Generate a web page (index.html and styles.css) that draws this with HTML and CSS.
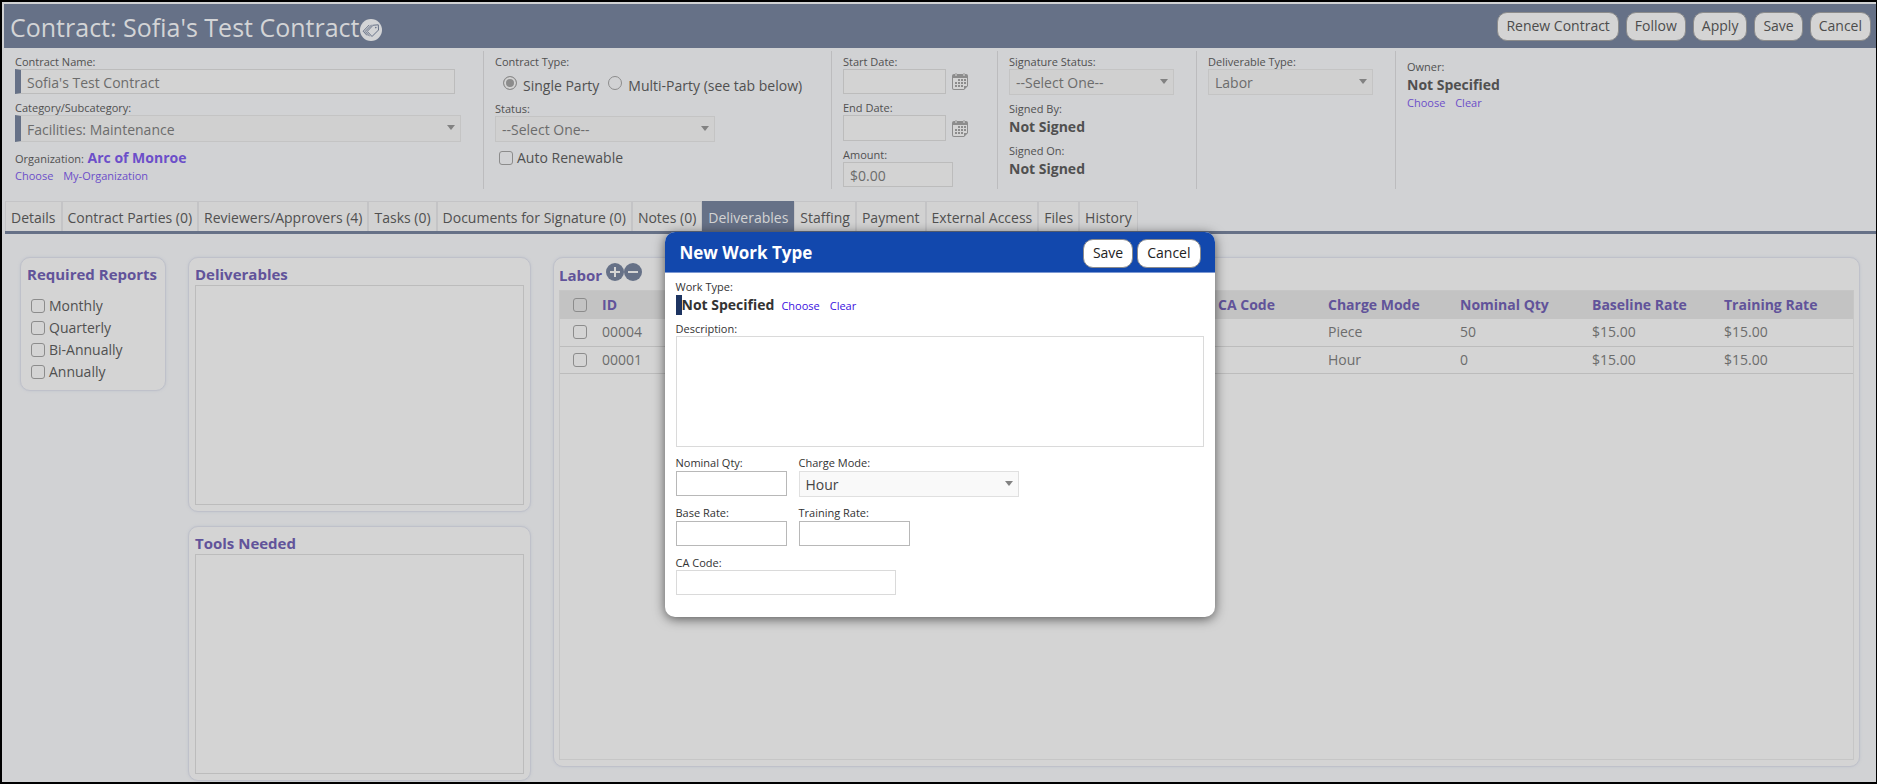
FILE: index.html
```
<!DOCTYPE html>
<html lang="en">
<head>
  <meta charset="UTF-8">
  <meta name="viewport" content="width=device-width, initial-scale=1.0">
  <title>Contract: Sofia's Test Contract</title>
  <link rel="stylesheet" href="styles.css">
</head>
<body>
  <svg class="sprite" width="0" height="0" aria-hidden="true">
    <symbol id="calendar" viewBox="0 0 16 17">
      <path d="M2 1h12q2 0 2 2v10l-4 4H2q-2 0-2-2V3q0-2 2-2z" fill="#8c8c8c"/>
      <path d="M1 5h14v8h-3v3H2q-1 0-1-1z" fill="#d4d4d4"/>
      <path d="M3 0h2v3H3zM11 0h2v3h-2z" fill="#b4b4b4"/>
      <path d="M6 6h2v2H6zM9 6h2v2H9zM12 6h2v2h-2zM3 9h2v2H3zM6 9h2v2H6zM9 9h2v2H9zM12 9h2v2h-2zM3 12h2v2H3zM6 12h2v2H6zM9 12h2v2H9z" fill="#8c8c8c"/>
    </symbol>
  </svg>

  <header class="topbar">
    <h1>Contract: Sofia's Test Contract</h1>
    <svg class="tag-icon" viewBox="0 0 22 22" aria-hidden="true">
      <circle cx="11" cy="11" r="11" fill="#d3d4d6"/>
      <g fill="none" stroke="#667187" stroke-linejoin="round" stroke-linecap="round">
        <path d="M13.500 6.200l4.800-.4.2 5.200-6.500 6.500-4.500-4.800z"/>
        <path d="M11.500 6L5.200 12.400l4.200 4.600M9 6.200L3.200 12.200l3.600 4"/>
      </g>
      <circle cx="15.800" cy="8.600" r=".8" fill="#667187"/>
    </svg>
    <div class="buttons">
      <button>Renew Contract</button>
      <button>Follow</button>
      <button>Apply</button>
      <button>Save</button>
      <button>Cancel</button>
    </div>
  </header>

  <section class="summary">
    <div class="col">
      <label for="contract-name">Contract Name:</label>
      <input type="text" id="contract-name" class="required" value="Sofia's Test Contract">
      <label for="category">Category/Subcategory:</label>
      <select id="category" class="required wide"><option>Facilities: Maintenance</option></select>
      <div class="org"><span class="label">Organization:</span> <a href="#" class="org-name">Arc of Monroe</a></div>
      <div class="links"><a href="#">Choose</a> <a href="#">My-Organization</a></div>
    </div>
    <div class="col">
      <span class="label">Contract Type:</span>
      <div class="radios">
        <input type="radio" name="type" id="single" checked><label for="single">Single Party</label>
        <input type="radio" name="type" id="multi"><label for="multi">Multi-Party (see tab below)</label>
      </div>
      <label for="status">Status:</label>
      <select id="status" class="medium"><option>--Select One--</option></select>
      <div class="check"><input type="checkbox" id="renewable"><label for="renewable">Auto Renewable</label></div>
    </div>
    <div class="col">
      <label for="start">Start Date:</label>
      <div class="date"><input type="text" id="start"><svg viewBox="0 0 16 17"><use href="#calendar"/></svg></div>
      <label for="end">End Date:</label>
      <div class="date"><input type="text" id="end"><svg viewBox="0 0 16 17"><use href="#calendar"/></svg></div>
      <label for="amount">Amount:</label>
      <input type="text" id="amount" class="short" value="$0.00">
    </div>
    <div class="col">
      <label for="sig-status">Signature Status:</label>
      <select id="sig-status" class="small"><option>--Select One--</option></select>
      <span class="label">Signed By:</span>
      <strong>Not Signed</strong>
      <span class="label">Signed On:</span>
      <strong>Not Signed</strong>
    </div>
    <div class="col">
      <label for="deliv-type">Deliverable Type:</label>
      <select id="deliv-type" class="small"><option>Labor</option></select>
    </div>
    <div class="col owner">
      <span class="label">Owner:</span>
      <strong>Not Specified</strong>
      <div class="links"><a href="#">Choose</a> <a href="#">Clear</a></div>
    </div>
  </section>

  <nav class="tabs">
    <a href="#">Details</a>
    <a href="#">Contract Parties (0)</a>
    <a href="#">Reviewers/Approvers (4)</a>
    <a href="#">Tasks (0)</a>
    <a href="#">Documents for Signature (0)</a>
    <a href="#">Notes (0)</a>
    <a href="#" class="active">Deliverables</a>
    <a href="#">Staffing</a>
    <a href="#">Payment</a>
    <a href="#">External Access</a>
    <a href="#">Files</a>
    <a href="#">History</a>
  </nav>

  <main>
    <section class="panel reports">
      <h2>Required Reports</h2>
      <div class="check"><input type="checkbox" id="monthly"><label for="monthly">Monthly</label></div>
      <div class="check"><input type="checkbox" id="quarterly"><label for="quarterly">Quarterly</label></div>
      <div class="check"><input type="checkbox" id="biannually"><label for="biannually">Bi-Annually</label></div>
      <div class="check"><input type="checkbox" id="annually"><label for="annually">Annually</label></div>
    </section>

    <div class="lists">
      <section class="panel">
        <h2>Deliverables</h2>
        <div class="box"></div>
      </section>
      <section class="panel">
        <h2>Tools Needed</h2>
        <div class="box"></div>
      </section>
    </div>

    <section class="panel labor">
      <div class="labor-head">
        <h2>Labor</h2>
        <button class="round" aria-label="Add"><svg viewBox="0 0 18 18"><circle cx="9" cy="9" r="9"/><path d="M9 4v10M4 9h10"/></svg></button>
        <button class="round" aria-label="Remove"><svg viewBox="0 0 18 18"><circle cx="9" cy="9" r="9"/><path d="M4 9h10"/></svg></button>
      </div>
      <div class="grid">
        <table>
          <thead>
            <tr>
              <th class="pick"><input type="checkbox" aria-label="Select all"></th>
              <th class="id">ID</th>
              <th class="ca">CA Code</th>
              <th>Charge Mode</th>
              <th>Nominal Qty</th>
              <th>Baseline Rate</th>
              <th>Training Rate</th>
            </tr>
          </thead>
          <tbody>
            <tr>
              <td class="pick"><input type="checkbox" aria-label="Select 00004"></td>
              <td>00004</td><td></td><td>Piece</td><td>50</td><td>$15.00</td><td>$15.00</td>
            </tr>
            <tr>
              <td class="pick"><input type="checkbox" aria-label="Select 00001"></td>
              <td>00001</td><td></td><td>Hour</td><td>0</td><td>$15.00</td><td>$15.00</td>
            </tr>
          </tbody>
        </table>
      </div>
    </section>
  </main>

  <div class="modal" role="dialog" aria-labelledby="modal-title">
    <div class="modal-head">
      <h3 id="modal-title">New Work Type</h3>
      <div class="buttons">
        <button>Save</button>
        <button>Cancel</button>
      </div>
    </div>
    <div class="modal-body">
      <span class="label">Work Type:</span>
      <div class="work-type"><strong>Not Specified</strong> <a href="#">Choose</a> <a href="#">Clear</a></div>
      <label for="description">Description:</label>
      <textarea id="description"></textarea>
      <div class="fields">
        <div>
          <label for="qty">Nominal Qty:</label>
          <input type="text" id="qty">
        </div>
        <div>
          <label for="mode">Charge Mode:</label>
          <select id="mode"><option>Hour</option></select>
        </div>
      </div>
      <div class="fields">
        <div>
          <label for="base">Base Rate:</label>
          <input type="text" id="base">
        </div>
        <div>
          <label for="training">Training Rate:</label>
          <input type="text" id="training">
        </div>
      </div>
      <label for="ca-code">CA Code:</label>
      <input type="text" id="ca-code">
    </div>
  </div>
</body>
</html>
```
FILE: styles.css
```
* {
  box-sizing: border-box;
}

body {
  margin: 0;
  min-height: 100vh;
  padding: 2px 0 0 2px;
  border: 2px solid #000;
  border-right-width: 1px;
  background: #d1d2d4;
  font-family: "Open Sans", "Noto Sans", sans-serif;
  font-size: 14px;
  line-height: 20px;
  color: #505050;
  display: flex;
  flex-direction: column;
}

h1, h2, h3 {
  margin: 0;
}

a {
  color: #6c4fc9;
  text-decoration: none;
}

.sprite {
  position: absolute;
}

.topbar {
  display: flex;
  align-items: center;
  height: 44px;
  padding: 0 5px 0 6px;
  background: #667187;
}

.topbar h1 {
  font-size: 25px;
  font-weight: normal;
  line-height: 44px;
  padding-top: 2px;
  color: #d3d4d6;
}

.tag-icon {
  width: 22px;
  height: 22px;
  margin-top: 8px;
}

.buttons {
  display: flex;
  gap: 7px;
  margin-left: auto;
}

.buttons button {
  height: 29px;
  padding: 0 8px;
  border: 1px solid #8c8c8c;
  border-radius: 10px;
  background: #d4d4d4;
  font: inherit;
  color: #4c4c4c;
}

/* Contract summary */
.summary {
  display: flex;
  height: 138px;
  margin: 3px 0 12px;
}

.col {
  width: 199px;
  padding: 3px 0 0 11px;
  border-left: 1px solid #bcbcbe;
}

.col:nth-child(1) {
  width: 479px;
  border-left: 0;
}

.col:nth-child(2) {
  width: 348px;
}

.col:nth-child(3) {
  width: 166px;
}

label, .label {
  display: block;
  font-size: 11px;
  line-height: 15px;
}

strong {
  display: block;
  line-height: 20px;
  font-weight: 700;
}

input[type=text], select, textarea {
  display: block;
  height: 25px;
  padding: 2px 6px 0;
  border: 1px solid #bcbcbc;
  background: #d3d3d3;
  font: inherit;
  color: #6c6c6c;
  border-radius: 0;
}

select {
  appearance: none;
  height: 26px;
  border-color: #c4c4c4;
  background: #d0d0d0 url("data:image/svg+xml,%3Csvg xmlns='http://www.w3.org/2000/svg' width='8' height='5'%3E%3Cpath d='M0 0h8L4 5z' fill='%23828282'/%3E%3C/svg%3E") no-repeat right 5px top 9px;
}

.col > input, .col > select, .date {
  margin-bottom: 6px;
}

#contract-name {
  width: 440px;
}

.required, #contract-name {
  border-left: 6px solid #667187;
}

.wide {
  width: 446px;
  height: 27px;
}

.medium {
  width: 220px;
}

.small {
  width: 165px;
}

.org .label {
  display: inline;
}

.org-name {
  font-weight: 700;
}

.links, .work-type a {
  font-size: 11px;
  line-height: 16px;
}

.links a {
  margin-right: 7px;
}

.radios, .check {
  display: flex;
  align-items: center;
}

.radios {
  height: 32px;
  padding-left: 8px;
}

.radios label, .check label {
  font-size: 14px;
  line-height: 20px;
}

.radios label {
  margin: 2px 9px 0 6px;
}

.check input, .radios input, .pick input {
  appearance: none;
  width: 14px;
  height: 14px;
  margin: 0;
  border: 1px solid #8c8c8c;
  border-radius: 3px;
}

.radios input {
  margin-bottom: 4px;
  border-radius: 50%;
}

.radios input:checked {
  background: #8c8c8c;
  box-shadow: inset 0 0 0 2px #d3d3d3;
}

.check {
  padding-left: 4px;
  gap: 4px;
}

.date {
  display: flex;
  align-items: center;
  gap: 6px;
}

.date input {
  width: 103px;
}

#end {
  height: 26px;
}

.date svg {
  width: 16px;
  height: 17px;
}

.short {
  width: 110px;
}

.col strong {
  padding-top: 1px;
  margin-bottom: 6px;
}

.owner {
  padding-top: 8px;
}

.col.owner strong {
  margin-bottom: 0;
}

/* Tabs */
.tabs {
  display: flex;
  margin-left: 1px;
  border-bottom: 3px solid #667187;
}

.tabs a {
  height: 30px;
  padding: 0 5px;
  border: 1px solid #c4c4c6;
  border-bottom: 0;
  background: #d2d2d2;
  line-height: 32px;
  color: #505050;
  white-space: nowrap;
}

.tabs .active {
  border-color: #667187;
  background: #667187;
  color: #d4d4d4;
}

/* Panels */
main {
  display: flex;
  flex: 1;
  align-items: flex-start;
  padding: 23px 16px 0;
}

.panel {
  padding: 6px;
  border: 1px solid #bfc1ca;
  border-radius: 10px;
  background: #d4d4d4;
  box-shadow: 0 0 3px #bfc3cc;
}

h2 {
  font-size: 15px;
  line-height: 21px;
  color: #61539a;
  white-space: nowrap;
}

.reports {
  flex-shrink: 0;
  width: 146px;
  height: 134px;
  margin-right: 22px;
}

.reports h2 {
  margin-bottom: 10px;
}

.reports .check {
  height: 22px;
}

.lists {
  display: flex;
  flex-direction: column;
  flex-shrink: 0;
  gap: 14px;
  width: 343px;
  margin-right: 22px;
}

.box {
  height: 220px;
  border: 1px solid #bcbcbc;
}

.labor {
  flex: 1;
  padding: 5px 5px 6px;
}

.labor-head {
  display: flex;
  height: 27px;
}

.labor-head h2 {
  line-height: 24px;
  margin-right: 4px;
}

.round {
  width: 18px;
  height: 18px;
  padding: 0;
  border: 0;
  background: none;
}

.round svg {
  display: block;
  fill: #667187;
  stroke: #d4d4d4;
  stroke-width: 2;
}

.round circle {
  stroke: none;
}

.grid {
  height: 470px;
  border: 1px solid #c6c6c6;
}

table {
  width: 100%;
  border-collapse: collapse;
  table-layout: fixed;
}

th, td {
  width: 132px;
  height: 27px;
  padding: 0;
  border-bottom: 1px solid #bcbcbc;
  text-align: left;
  color: #6c6c6c;
}

th {
  height: 28px;
  border-bottom: 0;
  background: #c3c3c3;
  color: #61539a;
}

th:last-child {
  width: 129px;
}

.pick {
  width: 42px;
  padding-left: 13px;
}

.pick input {
  display: block;
}

.id {
  width: auto;
}

.ca {
  width: 110px;
}

/* Dialog */
.modal {
  position: absolute;
  top: 232px;
  left: 50%;
  width: 550px;
  margin-left: -274px;
  border-radius: 10px;
  background: #fff;
  box-shadow: 0 2px 12px rgba(0, 0, 0, 0.6);
  overflow: hidden;
  color: #333;
}

.modal-head {
  display: flex;
  align-items: center;
  height: 41px;
  padding: 2px 14px 0 15px;
  border-bottom: 1px solid #7c98d2;
  background: #1248ad;
}

.modal-head h3 {
  font-size: 17px;
  color: #fff;
}

.modal .buttons {
  gap: 4px;
}

.modal .buttons button {
  padding: 0 9px;
  background: #fff;
  color: #222;
}

.modal-body {
  padding: 6px 11px 22px;
}

.work-type {
  display: flex;
  align-items: center;
  height: 20px;
  margin: 1px 0 6px;
  border-left: 6px solid #1d3461;
}

.work-type a {
  margin: 2px 3px 0 7px;
  color: #3a10e0;
}

.modal textarea, .modal input, .modal select {
  border-color: #dadada;
  background-color: #fff;
  color: #444;
}

.modal textarea {
  width: 100%;
  height: 111px;
  margin-bottom: 8px;
  resize: none;
}

.modal select, #ca-code {
  width: 220px;
}

.modal select {
  border-color: #e0e0e0;
  background-color: #f9f9f9;
}

.fields {
  display: flex;
  gap: 12px;
  height: 50px;
}

.fields label {
  margin-bottom: 1px;
}

.fields input {
  width: 111px;
}

.modal .fields input {
  border-color: #b8b8b8;
}
```
